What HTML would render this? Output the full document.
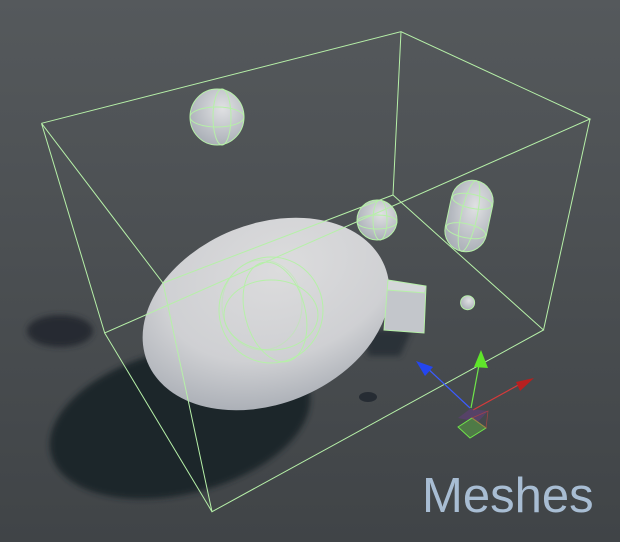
<!DOCTYPE html>
<html><head><style>
html,body{margin:0;padding:0;width:620px;height:542px;overflow:hidden;background:#4a4e51}
svg{display:block}
.t{position:absolute;left:422px;top:468px;font-family:"Liberation Sans",sans-serif;font-size:49px;color:#a8bdd3;letter-spacing:0px;font-weight:normal}
</style></head><body>
<svg width="620" height="542" viewBox="0 0 620 542">
<defs>
<linearGradient id="bg" x1="0" y1="0" x2="0" y2="1">
<stop offset="0" stop-color="#55595c"/><stop offset="1" stop-color="#404447"/></linearGradient>
<filter id="bl" x="-20%" y="-20%" width="140%" height="140%"><feGaussianBlur stdDeviation="3"/></filter>
<radialGradient id="eg" cx="0.62" cy="0.3" r="0.8"><stop offset="0" stop-color="#dcdcdd"/><stop offset="0.6" stop-color="#cfd0d3"/><stop offset="1" stop-color="#a3a8b0"/></radialGradient>
<radialGradient id="sp" cx="0.6" cy="0.35" r="0.7"><stop offset="0" stop-color="#e0e1e3"/><stop offset="1" stop-color="#a9aeb6"/></radialGradient>
</defs>
<rect width="620" height="542" fill="url(#bg)"/>
<!-- shadows -->
<ellipse cx="180" cy="422" rx="133" ry="72" transform="rotate(-14 180 422)" fill="#1f252c" filter="url(#bl)"/>
<ellipse cx="60" cy="331" rx="33" ry="16" fill="#262c33" filter="url(#bl)"/>
<ellipse cx="368" cy="397" rx="9" ry="5" fill="#262c33"/>
<polygon points="365,330 412,330 400,356 368,356" fill="#2a3037" filter="url(#bl)"/>
<!-- big ellipsoid -->
<ellipse cx="266" cy="314" rx="128" ry="90" transform="rotate(-22 266 314)" fill="url(#eg)"/>
<!-- cube -->
<polygon points="388,280 426,286 424,333 384,330" fill="#c3c6cb"/>
<polygon points="388,280 426,286 424,293 387,290" fill="#d5d7da"/>
<g fill="none" stroke="#b6f0a8" stroke-width="1">
<polygon points="388,280 426,286 424,333 384,330"/><line x1="387" y1="290" x2="426" y2="293"/>
</g>
<!-- spheres -->
<ellipse cx="217" cy="117" rx="27" ry="28" fill="url(#sp)"/>
<circle cx="377" cy="220" r="20" fill="url(#sp)"/>
<circle cx="467.6" cy="302.7" r="7" fill="url(#sp)"/>
<rect x="448" y="180" width="42" height="72" rx="21" transform="rotate(12 469 216)" fill="url(#sp)"/>
<g fill="none" stroke="#b6f0a8" stroke-width="1">
<ellipse cx="217" cy="117" rx="27" ry="28"/><ellipse cx="217" cy="117" rx="27" ry="10"/><ellipse cx="222" cy="117" rx="9" ry="28"/>
<circle cx="377" cy="220" r="20"/><ellipse cx="377" cy="222" rx="20" ry="7"/><ellipse cx="380" cy="220" rx="7" ry="20"/>
<circle cx="467.6" cy="302.7" r="7"/>
<rect x="448" y="180" width="42" height="72" rx="21" transform="rotate(12 469 216)"/>
<ellipse cx="469" cy="201" rx="20" ry="7" transform="rotate(12 469 216)"/>
<ellipse cx="469" cy="231" rx="20" ry="7" transform="rotate(12 469 216)"/>
<ellipse cx="469" cy="216" rx="8" ry="36" transform="rotate(12 469 216)"/>
<ellipse cx="271" cy="310" rx="52" ry="53"/>
<ellipse cx="271" cy="315" rx="47" ry="35"/>
<ellipse cx="275" cy="312" rx="30" ry="51" transform="rotate(-15 275 312)"/>
<ellipse cx="262" cy="305" rx="40" ry="45" stroke-opacity="0.5"/>
<!-- bounding box -->
<polyline points="41.5,123.3 401,31.7 590,119 104.7,333 41.5,123.3 163,283 393,195 401,31.7"/>
<polyline points="163,283 212,511.7 543.5,330 393,195"/>
<line x1="590" y1="119" x2="543.5" y2="330"/>
<line x1="104.7" y1="333" x2="212" y2="511.7"/>
</g>
<!-- gizmo -->
<g stroke-width="1.2">
<line x1="470" y1="408" x2="425" y2="366" stroke="#3b5cff"/>
<line x1="471" y1="408" x2="479" y2="365" stroke="#6fe64a"/>
<line x1="473" y1="410" x2="522" y2="383" stroke="#d63a3a"/>
</g>
<polygon points="416,361 433,367 425,376" fill="#2446f0"/>
<polygon points="481,350 488,368 474,367" fill="#5fe52a"/>
<polygon points="534,378 520,391 516,382" fill="#b81f1f"/>
<polygon points="458,418 470,409 488,411 478,422" fill="#6a3a8a" opacity="0.45"/>
<polygon points="458,427 472,418 486,428 470,438" fill="#4f7a46" stroke="#6fe64a" stroke-width="1"/>
<polygon points="472,418 488,411 486,428" fill="none" stroke="#c04040" stroke-width="0.8" opacity="0.7"/>
</svg>
<div class="t">Meshes</div>
</body></html>
